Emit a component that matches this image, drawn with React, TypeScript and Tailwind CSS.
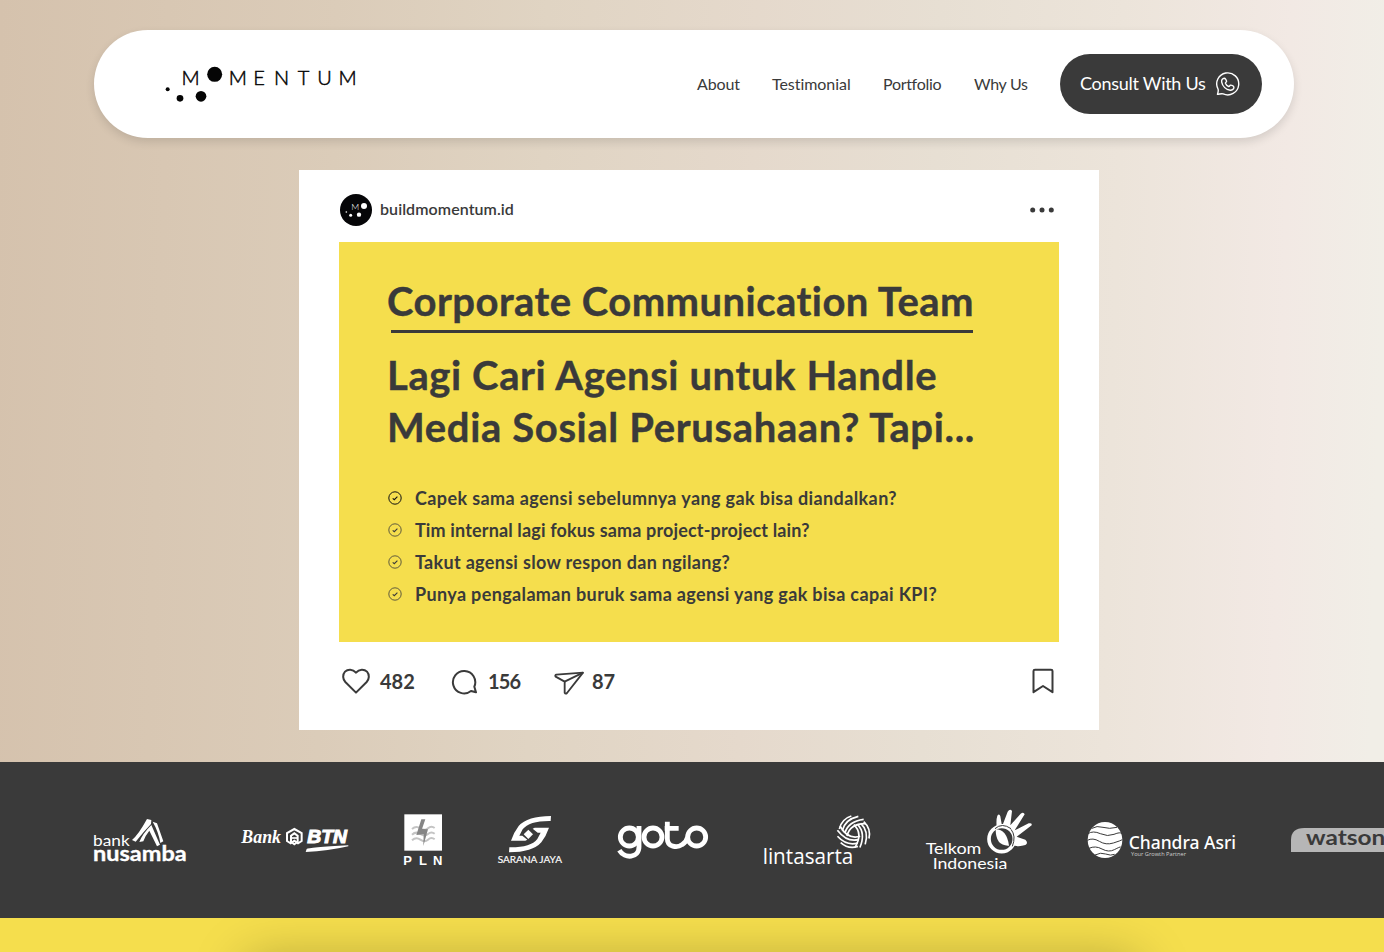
import type { ReactNode } from "react";

const navLinks = [
  { label: "About", className: "w-[43px] tracking-[-0.1px]" },
  { label: "Testimonial", className: "w-[79px] tracking-[-0.05px]" },
  { label: "Portfolio", className: "w-[59px] tracking-[-0.3px]" },
  { label: "Why Us", className: "w-[54px] tracking-[-0.3px]" },
];

const points = [
  { text: "Capek sama agensi sebelumnya yang gak bisa diandalkan?", className: "tracking-[0.39px]", strong: true },
  { text: "Tim internal lagi fokus sama project-project lain?", className: "tracking-[0.15px]", strong: false },
  { text: "Takut agensi slow respon dan ngilang?", className: "tracking-[0.31px]", strong: false },
  { text: "Punya pengalaman buruk sama agensi yang gak bisa capai KPI?", className: "tracking-[0.36px]", strong: false },
];

function MomentumLogo() {
  return (
    <svg viewBox="255 137 576 111" className="h-[37px] w-[192px]" fill="#050505">
      <text x="304.500 446.500 520 582 653 712 775.500" y="194" fontFamily="Lato" fontWeight="300" fontSize="60" stroke="#050505" strokeWidth="1.500">
        MMENTUM
      </text>
      <circle cx="404" cy="162" r="22.500" />
      <circle cx="363" cy="228" r="16" />
      <circle cx="300" cy="234" r="10" />
      <circle cx="263" cy="207" r="6" />
    </svg>
  );
}

function Avatar() {
  return (
    <svg viewBox="60 42 96 96" className="size-8" fill="white">
      <circle cx="108" cy="90" r="48" fill="#060608" />
      <text x="94" y="91" fontFamily="Lato" fontWeight="300" fontSize="24" textLength="24" lengthAdjust="spacingAndGlyphs">M</text>
      <circle cx="132" cy="78" r="9" />
      <circle cx="117" cy="104" r="6.500" />
      <circle cx="92" cy="106" r="4.500" />
      <circle cx="79" cy="96" r="2.500" />
    </svg>
  );
}

function WhatsappIcon() {
  return (
    <svg viewBox="0 0 24 24" className="size-6" fill="none" stroke="white" strokeWidth="1.400" strokeLinejoin="round" strokeLinecap="round">
      <path d="M1.500 22.300C2.300 20 2.600 18.600 2 17A11 11 0 1 1 7.200 21.900C5.600 21.400 4 22 1.500 22.300Z" />
      <path d="M8.300 6.200C6.500 6.300 5.300 8.200 5.700 10.200C6.500 14.400 10 17.700 14.200 18.200C16.300 18.300 18 17 17.900 15.200C17.800 14.100 15.600 13 14.500 13.200C13.600 13.500 13.600 14.800 12.700 14.500C11.200 13.900 10 12.700 9.400 11.200C9.300 10.400 10.600 10.200 10.600 9.300C10.400 8.200 9.300 6.200 8.300 6.200Z" />
    </svg>
  );
}

function CheckIcon({ strong }: { strong: boolean }) {
  return (
    <svg viewBox="0 0 14 14" className="size-3.5" fill="none" stroke={strong ? "#111" : "#3a3a3a"} strokeWidth={strong ? 1 : 0.8}>
      <circle cx="7" cy="7" r="6.200" />
      <path d="M4.700 7.300L6.300 8.700L9.400 5.600" strokeWidth="1.100" />
    </svg>
  );
}

function HeartIcon() {
  return (
    <svg viewBox="36 38 84 84" className="size-7" fill="none" stroke="#3a3a3a" strokeWidth="6" strokeLinejoin="round">
      <path d="M78 55C68 43 53 44 45 52C37 61 38 74 46 83L78 115L110 83C118 74 119 61 111 52C103 44 88 43 78 55Z" />
    </svg>
  );
}

function CommentIcon() {
  return (
    <svg viewBox="358 39 84 84" className="size-7" fill="none" stroke="#3a3a3a" strokeWidth="6" strokeLinejoin="round">
      <path d="M436 115L421 111A33.500 33.500 0 1 1 431 98Z" />
    </svg>
  );
}

function SendIcon() {
  return (
    <svg viewBox="668 39 90 84" className="h-7 w-[30px]" fill="none" stroke="#3a3a3a" strokeWidth="5.500" strokeLinejoin="round">
      <path d="M755 56L675 62Q670 64 673 68L700 83L700 116Q703 121 707 117Z" />
      <path d="M700 83L755 56" />
    </svg>
  );
}

function BookmarkIcon() {
  return (
    <svg viewBox="0 0 22 26" className="h-[26px] w-[22px]" fill="none" stroke="#3a3a3a" strokeWidth="2" strokeLinejoin="round">
      <path d="M1.500 24.200V3Q1.500 1.700 3 1.700H19Q20.500 1.700 20.500 3V24.200L11 18Z" />
    </svg>
  );
}

function Logo({ viewBox, className, children }: { viewBox: string; className: string; children: ReactNode }) {
  return (
    <svg viewBox={viewBox} className={`h-20 shrink-0 overflow-visible ${className}`} fill="white">
      {children}
    </svg>
  );
}

function Nusamba() {
  return (
    <Logo viewBox="42 0 276 240" className="w-[92px]">
      <text x="39" y="137" fontFamily="Lato" fontSize="46" textLength="110" lengthAdjust="spacingAndGlyphs">bank</text>
      <text x="39" y="182" fontFamily="Lato" fontWeight="700" fontSize="63" stroke="white" strokeWidth="1" textLength="281" lengthAdjust="spacingAndGlyphs">nusamba</text>
      <path d="M156 120Q176 103 201 57L214 60L213 72Q190 96 167 125Z" />
      <path d="M178 126Q187 102 214 75L240 134L231 139L208 92Q197 105 190 124Z" />
      <path d="M218 65L231 70L250 124L241 129Q236 96 218 65Z" />
    </Logo>
  );
}

function BankBtn() {
  return (
    <Logo viewBox="483 0 324 240" className="w-[108px]">
      <text x="484" y="130" fontFamily="Liberation Serif" fontStyle="italic" fontWeight="700" fontSize="57" textLength="119" lengthAdjust="spacingAndGlyphs">Bank</text>
      <path d="M643 87L665 99V123L654 130L643 122L632 130L621 123V99Z" fill="none" stroke="white" strokeWidth="6" />
      <path d="M633 125V107L643 100L653 107V125L643 133Z" fill="none" stroke="white" strokeWidth="6" />
      <path d="M634 114H652" stroke="white" strokeWidth="5" />
      <text x="682" y="130" fontFamily="Liberation Sans" fontStyle="italic" fontWeight="700" fontSize="54" stroke="white" strokeWidth="3" textLength="119" lengthAdjust="spacingAndGlyphs">BTN</text>
      <path d="M680 147Q684 143 805 136V139Q745 153 677 156Z" />
    </Logo>
  );
}

function Pln() {
  return (
    <Logo viewBox="42 0 114 240" className="w-[38px]">
      <rect x="43" y="43" width="113" height="109" />
      <g fill="none" stroke="#c4c4c4" strokeWidth="6">
        <path d="M66 87Q78 76 91 85T114 85T134 84" />
        <path d="M66 104Q78 93 91 102T114 102T134 101" />
        <path d="M66 121Q78 110 91 119T114 119T134 118" />
      </g>
      <path d="M94 58H106L96 87L114 88L100 138L101 103L79 105Z" fill="#858585" />
      <text x="40 87 129" y="196" fontFamily="Liberation Sans" fontWeight="700" fontSize="39">PLN</text>
    </Logo>
  );
}

function SaranaJaya() {
  return (
    <Logo viewBox="321 0 192 240" className="w-16">
      <path d="M483 48L482 63Q418 62 398 88L388 107H397L412 119L406 122H363Q372 96 386 78Q412 48 483 48Z" />
      <path d="M357 157L358 142Q422 143 442 117L452 98H443L428 86L434 83H477Q468 109 454 127Q428 157 357 157Z" />
      <path d="M415 89L429 103L415 117L401 103Z" />
      <text x="323" y="190" fontFamily="Lato" fontWeight="400" fontSize="25.500" stroke="white" strokeWidth="0.400" textLength="193" lengthAdjust="spacingAndGlyphs">SARANA JAYA</text>
    </Logo>
  );
}

function Goto() {
  return (
    <Logo viewBox="678 0 276 240" className="w-[92px]">
      <title>goto</title>
      <g fill="none" stroke="white" strokeWidth="14.500">
        <circle cx="718" cy="111" r="27" />
        <path d="M747 78V140C747 174 704 178 688 151" />
        <circle cx="789" cy="111" r="27" />
        <path d="M832 65V116C832 141 861 145 876 134Q890 125 893 111M824 85H866" />
        <circle cx="920" cy="111" r="27" />
      </g>
    </Logo>
  );
}

function Lintasarta() {
  return (
    <Logo viewBox="37 0 321 240" className="w-[107px]">
      <text x="36" y="191" fontFamily="Open Sans" fontSize="65" textLength="272" lengthAdjust="spacingAndGlyphs">lintasarta</text>
      {["rotate(0 309 97)", "rotate(120 309 97)", "rotate(240 309 97)"].map((turn) => (
        <g key={turn} transform={turn} fill="none" stroke="white" strokeWidth="5">
          <path d="M266 87Q273 57 302 48" />
          <path d="M275 92Q283 58 323 49" />
          <path d="M283 98Q293 64 339 58" />
          <path d="M289 108Q298 70 346 71" />
        </g>
      ))}
    </Logo>
  );
}

function Telkom() {
  return (
    <Logo viewBox="525 0 321 240" className="w-[107px]">
      <text x="527" y="161" fontFamily="Lato" fontSize="47" textLength="167" lengthAdjust="spacingAndGlyphs">Telkom</text>
      <text x="548" y="208" fontFamily="Lato" fontSize="46" textLength="224" lengthAdjust="spacingAndGlyphs">Indonesia</text>
      <path d="M740 82Q738 58 742 47Q748 39 751 49L755 72H759L773 35Q780 25 786 33L781 76L812 41Q821 35 824 43L794 91L836 70Q847 68 845 76L800 110L826 119Q836 129 826 135Q806 142 786 135Z" />
      <circle cx="755" cy="117" r="38" fill="#3a3a3a" stroke="white" strokeWidth="11" />
      <path d="M737 88Q770 88 777 137Q737 139 737 88Z" />
      <path d="M735 86Q756 67 783 86M783 88Q799 108 787 139" fill="none" stroke="#3a3a3a" strokeWidth="3" />
    </Logo>
  );
}

function ChandraAsri() {
  return (
    <Logo viewBox="51 0 447 240" className="w-[149px]">
      <ellipse cx="105" cy="120" rx="52" ry="54" />
      <g fill="none" stroke="#3a3a3a" strokeWidth="3">
        <path d="M66 85Q80 76 99 82T141 82" />
        <path d="M54 101Q69 91 91 101T132 103T156 101" />
        <path d="M52 121Q68 112 88 124T130 129T157 119" />
        <path d="M57 145Q76 136 96 147T133 149T152 141" />
        <path d="M75 165Q92 156 107 162T134 163" />
      </g>
      <text x="176" y="147" fontFamily="Noto Sans" fontWeight="500" fontSize="56" textLength="322" lengthAdjust="spacingAndGlyphs">Chandra Asri</text>
      <text x="183" y="169" fontFamily="Open Sans" fontSize="17" fill="#d0d0d0" textLength="165" lengthAdjust="spacingAndGlyphs">Your Growth Partner</text>
    </Logo>
  );
}

function Watsons() {
  return (
    <Logo viewBox="663 0 339 240" className="w-[113px]">
      <path d="M663 156V120Q663 84 703 84H1002V156Z" fill="#b6b6b6" />
      <text x="708" y="136" fontFamily="Lato" fontWeight="700" fontSize="63" fill="#3a3a3a" textLength="270" lengthAdjust="spacingAndGlyphs">watsons</text>
    </Logo>
  );
}

export default function App() {
  return (
    <div className="h-[952px] w-full overflow-hidden font-[Lato,sans-serif] text-[#3a3a3a] [font-variant-ligatures:none]">
      <section className="h-[762px] bg-[linear-gradient(91.5deg,#d5c2ad_0%,#dbccb9_24%,#e0d4c3_39%,#e5d9cc_54%,#e7dfd3_67%,#ece4da_80%,#f2e9e4_92%,#f1eee7_99%)] pt-[30px]">
        <header className="ml-[94px] flex h-[108px] w-[1200px] items-center justify-between rounded-full bg-white pr-8 pl-[71px] shadow-[0_4px_10px_rgba(0,0,0,0.12)]">
          <MomentumLogo />
          <div className="flex items-center">
            <nav className="mr-8 flex gap-8 pb-px text-base whitespace-nowrap">
              {navLinks.map((link) => (
                <a key={link.label} className={link.className}>{link.label}</a>
              ))}
            </nav>
            <button className="flex h-[60px] w-[202px] items-center justify-between rounded-full bg-[#3a3a3a] pr-[22px] pl-5 text-lg tracking-[-0.27px] whitespace-nowrap text-white">
              <span className="pb-0.5">Consult With Us</span>
              <WhatsappIcon />
            </button>
          </div>
        </header>

        <article className="mt-8 ml-[299px] h-[560px] w-[800px] bg-white px-10 pt-6">
          <div className="flex h-8 items-center justify-between pr-[5px] pl-px">
            <div className="flex items-center gap-2 font-semibold tracking-[0.07px]">
              <Avatar />
              <span className="pb-0.5">buildmomentum.id</span>
            </div>
            <svg viewBox="0 0 24 6" className="h-1.5 w-6" fill="#3a3a3a">
              <circle cx="2.700" cy="3" r="2.500" />
              <circle cx="12" cy="3" r="2.500" />
              <circle cx="21.300" cy="3" r="2.500" />
            </svg>
          </div>

          <div className="mt-4 h-[400px] bg-[#f5de4d] px-12 pt-[33px] font-bold whitespace-nowrap">
            <h2 className="text-[40px] leading-[52px] tracking-[0.46px] [-webkit-text-stroke:0.4px_#3a3a3a]">Corporate Communication Team</h2>
            <div className="mt-[3px] ml-1 h-[3px] w-[582px] bg-[#3a3a3a]" />
            <h1 className="mt-4 text-[40px] leading-[52px] [-webkit-text-stroke:0.4px_#3a3a3a]">
              <span className="block tracking-[0.6px]">Lagi Cari Agensi untuk Handle</span>
              <span className="block tracking-[0.64px]">Media Sosial Perusahaan? Tapi...</span>
            </h1>
            <ul className="mt-[29px] ml-px text-lg leading-8">
              {points.map((point) => (
                <li key={point.text} className="flex items-center gap-[13px]">
                  <CheckIcon strong={point.strong} />
                  <span className={point.className}>{point.text}</span>
                </li>
              ))}
            </ul>
          </div>

          <div className="mt-[25px] flex h-7 items-center justify-between pr-[5px] pl-[3px] text-xl font-bold">
            <div className="flex items-center">
              <HeartIcon />
              <span className="ml-2.5 w-[70px]">482</span>
              <CommentIcon />
              <span className="ml-2.5 w-[66px] tracking-[-0.9px]">156</span>
              <SendIcon />
              <span className="ml-2">87</span>
            </div>
            <BookmarkIcon />
          </div>
        </article>
      </section>

      <section className="flex h-[156px] items-center gap-[55px] overflow-hidden bg-[#3a3a3a] pl-[94px]">
        <Nusamba />
        <BankBtn />
        <Pln />
        <SaranaJaya />
        <Goto />
        <Lintasarta />
        <Telkom />
        <ChandraAsri />
        <Watsons />
      </section>

      <section className="h-[34px] overflow-hidden bg-[#f5de4d] pt-[42px]">
        <div className="ml-[247px] h-[600px] w-[890px] bg-[#f5de4d] shadow-[0_0_50px_rgba(0,0,0,0.28)]" />
      </section>
    </div>
  );
}
